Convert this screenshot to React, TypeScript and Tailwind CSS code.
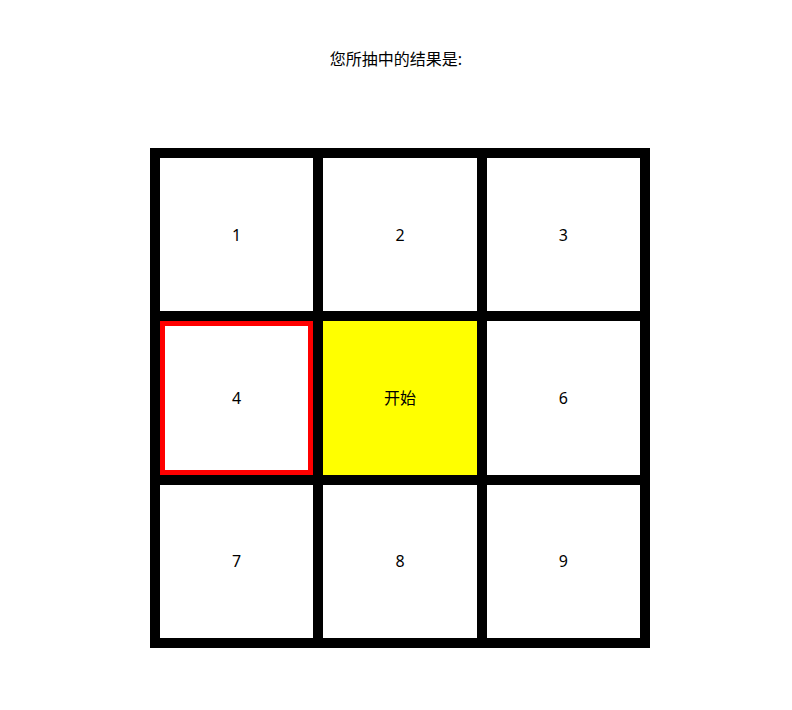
export default function App() {
  const cells = ["1", "2", "3", "4", "开始", "6", "7", "8", "9"];
  return (
    <div
      className="w-[792px] h-[710px] bg-white text-black"
      style={{ fontFamily: '"Noto Sans", "Noto Sans CJK SC", sans-serif' }}
    >
      <div className="pt-[47px] text-center text-[16px] leading-[24px]">您所抽中的结果是:</div>
      <div className="ml-[150px] mt-[77px] w-[500px] h-[500px] bg-black p-[10px] grid grid-cols-3 grid-rows-3 gap-[10px]">
        {cells.map((c, i) => (
          <div
            key={i}
            className={
              "flex items-center justify-center text-[16px] " +
              (i === 3
                ? "bg-white border-[5px] border-[#ff0000]"
                : i === 4
                ? "bg-[#ffff00]"
                : "bg-white")
            }
          >
            {c}
          </div>
        ))}
      </div>
    </div>
  );
}
